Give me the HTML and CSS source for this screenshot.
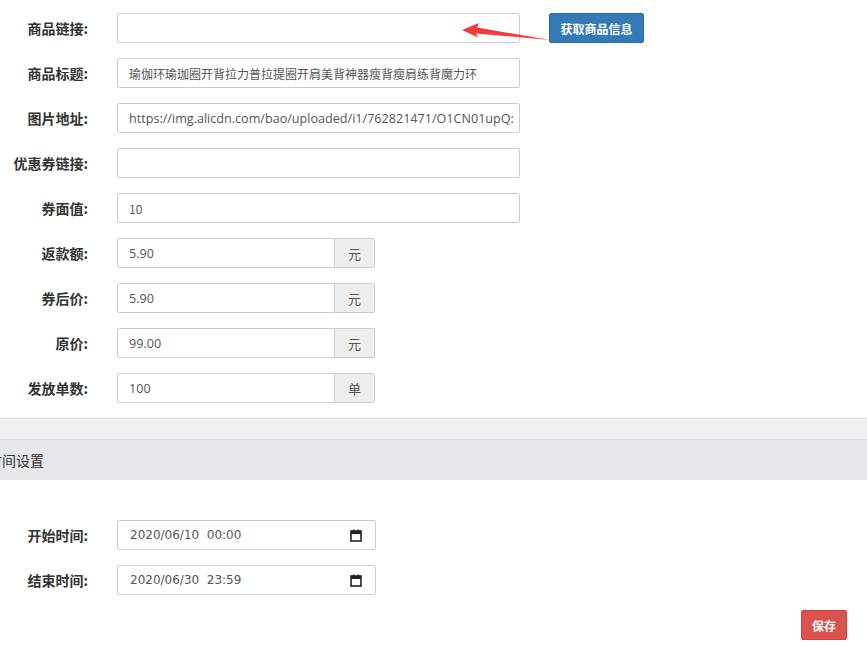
FILE: index.html
```html
<!DOCTYPE html>
<html lang="zh-CN">
<head>
<meta charset="utf-8">
<link rel="stylesheet" href="styles.css">
</head>
<body>
<div class="page">
  <form class="form">
    <div class="row">
      <label class="label">商品链接:</label>
      <div class="field"><div class="input"></div></div>
      <button type="button" class="btn btn-primary">获取商品信息</button>
      <svg class="arrow" width="100" height="30" viewBox="0 0 100 30">
        <polygon points="1,9 18,2 16,6.5 89,19 15,12.5 17,16.5" fill="#f43b3b"/>
      </svg>
    </div>
    <div class="row">
      <label class="label">商品标题:</label>
      <div class="field"><div class="input">瑜伽环瑜珈圈开背拉力普拉提圈开肩美背神器瘦背瘦肩练背魔力环</div></div>
    </div>
    <div class="row">
      <label class="label">图片地址:</label>
      <div class="field"><div class="input clip">https://img.alicdn.com/bao/uploaded/i1/762821471/O1CN01upQ:</div></div>
    </div>
    <div class="row">
      <label class="label">优惠券链接:</label>
      <div class="field"><div class="input"></div></div>
    </div>
    <div class="row">
      <label class="label">券面值:</label>
      <div class="field"><div class="input">10</div></div>
    </div>
    <div class="row">
      <label class="label">返款额:</label>
      <div class="group"><div class="input g-input">5.90</div><span class="addon">元</span></div>
    </div>
    <div class="row">
      <label class="label">券后价:</label>
      <div class="group"><div class="input g-input">5.90</div><span class="addon">元</span></div>
    </div>
    <div class="row">
      <label class="label">原价:</label>
      <div class="group"><div class="input g-input">99.00</div><span class="addon">元</span></div>
    </div>
    <div class="row">
      <label class="label">发放单数:</label>
      <div class="group"><div class="input g-input">100</div><span class="addon">单</span></div>
    </div>
  </form>

  <div class="band"></div>
  <div class="section-head">时间设置</div>

  <div class="form form-time">
    <div class="row">
      <label class="label">开始时间:</label>
      <div class="input date"><span class="date-text">2020/06/10&nbsp;&nbsp;00:00</span>
        <svg class="cal" width="12" height="13" viewBox="0 0 12 13"><rect x="1" y="2" width="10" height="10" fill="none" stroke="#222" stroke-width="1.6"/><rect x="1" y="2" width="10" height="3" fill="#222"/><rect x="3" y="0.5" width="1.5" height="2" fill="#222"/><rect x="7.5" y="0.5" width="1.5" height="2" fill="#222"/></svg>
      </div>
    </div>
    <div class="row">
      <label class="label">结束时间:</label>
      <div class="input date"><span class="date-text">2020/06/30&nbsp;&nbsp;23:59</span>
        <svg class="cal" width="12" height="13" viewBox="0 0 12 13"><rect x="1" y="2" width="10" height="10" fill="none" stroke="#222" stroke-width="1.6"/><rect x="1" y="2" width="10" height="3" fill="#222"/><rect x="3" y="0.5" width="1.5" height="2" fill="#222"/><rect x="7.5" y="0.5" width="1.5" height="2" fill="#222"/></svg>
      </div>
    </div>
  </div>

  <div class="actions">
    <button type="button" class="btn btn-danger">保存</button>
  </div>
</div>
</body>
</html>
```
FILE: styles.css
```css
html, body {
  margin: 0;
  padding: 0;
  background: #fff;
}
body {
  font-family: "Noto Sans CJK SC", "Noto Sans", sans-serif;
  font-size: 12px;
  color: #333;
  width: 867px;
  overflow: hidden;
}
.page {
  padding-top: 13px;
}
.form {
  display: flex;
  flex-direction: column;
  gap: 15px;
}
.row {
  display: flex;
  align-items: center;
  height: 30px;
  position: relative;
}
.label {
  width: 88px;
  text-align: right;
  font-weight: bold;
  font-size: 14px;
  color: #333;
  margin-right: 29px;
  flex: none;
  white-space: nowrap;
}
.field {
  width: 403px;
  flex: none;
}
.input {
  box-sizing: border-box;
  height: 30px;
  border: 1px solid #ccc;
  border-radius: 2px;
  padding: 0 11px;
  display: flex;
  align-items: center;
  font-size: 12px;
  color: #555;
  background: #fff;
  white-space: nowrap;
  overflow: hidden;
  font-family: "Noto Sans CJK SC", "Open Sans", sans-serif;
}
.clip {
  font-family: "Open Sans", "Noto Sans CJK SC", sans-serif;
  font-size: 12.6px;
}
.group {
  display: flex;
  width: 258px;
}
.g-input {
  width: 218px;
  border-radius: 2px 0 0 2px;
  font-family: "Open Sans", sans-serif;
  font-size: 12.6px;
}
.addon {
  box-sizing: border-box;
  width: 40px;
  height: 30px;
  border: 1px solid #ccc;
  border-left: 0;
  border-radius: 0 2px 2px 0;
  background: #eee;
  color: #555;
  font-size: 13px;
  display: flex;
  align-items: center;
  justify-content: center;
}
.btn {
  box-sizing: border-box;
  height: 30px;
  border-radius: 2px;
  color: #fff;
  font-size: 12px;
  font-family: "Noto Sans CJK SC", sans-serif;
  font-weight: bold;
  border: 1px solid transparent;
  padding: 0;
  cursor: pointer;
}
.btn-primary {
  width: 95px;
  margin-left: 29px;
  background: #337ab7;
  border-color: #2e6da4;
}
.arrow {
  position: absolute;
  left: 461px;
  top: 8px;
}
.band {
  margin-top: 15px;
  height: 20px;
  background: #f0f1f5;
  border-top: 1px solid #dcdde1;
  border-bottom: 1px solid #d6d7db;
}
.section-head {
  height: 40px;
  background: #e6e7eb;
  display: flex;
  align-items: center;
  margin-left: -12px;
  font-size: 14px;
  color: #333;
}
.form-time {
  margin-top: 40px;
}
.date {
  width: 259px;
  justify-content: space-between;
  padding: 0 13px 0 12px;
  font-family: "DejaVu Sans", sans-serif;
  font-size: 12px;
}
.date-text {
  color: #555;
}
.cal {
  display: block;
}
.actions {
  display: flex;
  justify-content: flex-end;
  padding-right: 20px;
  margin-top: 15px;
}
.btn-danger {
  width: 46px;
  background: #d9534f;
  border-color: #d43f3a;
}
```
